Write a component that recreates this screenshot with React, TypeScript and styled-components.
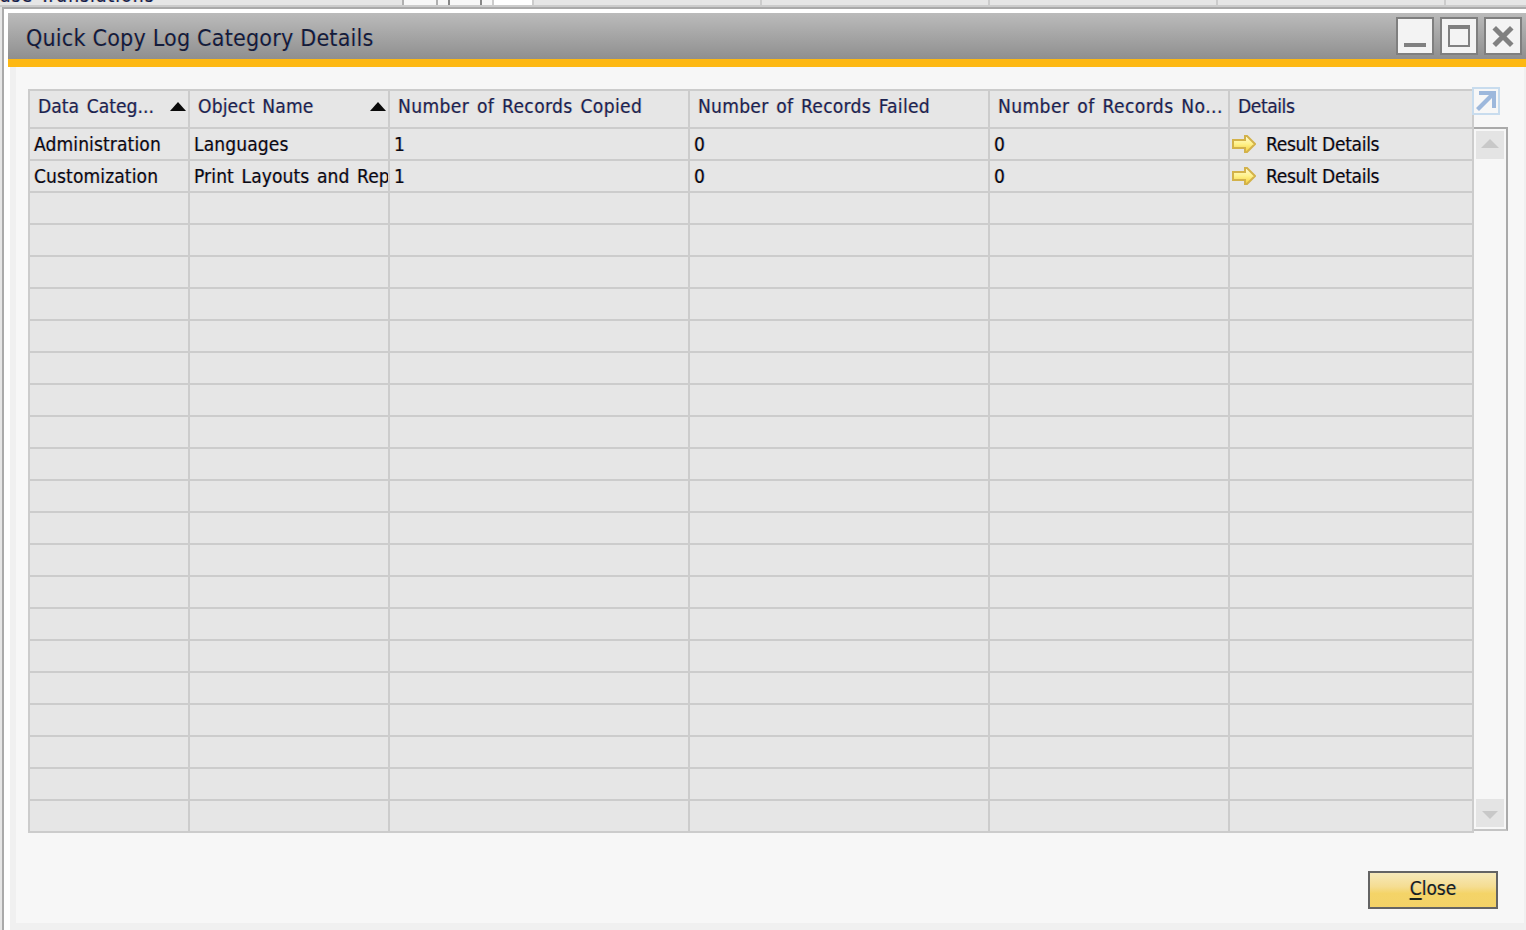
import React from "react";
import styled, { createGlobalStyle } from "styled-components";

const Global = createGlobalStyle`
  html, body { margin: 0; padding: 0; background: #e6e6e6; }
  #root { width: 1526px; height: 930px; overflow: hidden; }
  * { box-sizing: border-box; }
`;

const FONT = `"DejaVu Sans Condensed", "DejaVu Sans", sans-serif`;
const FRINGE = `text-shadow: -0.7px 0 rgba(225, 140, 50, 0.4), 0.7px 0 rgba(50, 120, 215, 0.4);`;

const Page = styled.div`
  display: flex;
  flex-direction: column;
  width: 1526px;
  height: 930px;
  font-family: ${FONT};
`;

const BackStrip = styled.div`
  display: flex;
  height: 7px;
  flex: none;
  border-bottom: 2px solid #cccccc;
  overflow: hidden;
  background: #e6e6e6;
`;
const BackText = styled.div`
  width: 402px;
  flex: none;
  font-size: 19px;
  line-height: 20px;
  margin-top: -15px;
  letter-spacing: 1.1px;
  color: #14204a;
  white-space: nowrap;
  ${FRINGE}
`;
const BackCell = styled.div<{ $w: number; $bg: string; $line: string }>`
  flex: none;
  width: ${(p) => p.$w}px;
  background: ${(p) => p.$bg};
  border-left: 2px solid ${(p) => p.$line};
`;

const Window = styled.div`
  flex: 1;
  margin-left: 2px;
  display: flex;
  flex-direction: column;
  border-left: 2px solid #aaaaaa;
  border-top: 2px solid #aaaaaa;
  background: #ffffff;
  padding: 4px 0 0 4px;
`;
const TitleBar = styled.div`
  flex: none;
  height: 54px;
  display: flex;
  align-items: center;
  padding: 0 4px 0 18px;
  border-bottom: 8px solid #fdb813;
  background: linear-gradient(#bbbbbb, #8f8f8f);
`;
const Title = styled.div`
  flex: 1;
  padding-top: 4px;
  font-size: 23px;
  letter-spacing: 0.23px;
  color: #141c3a;
  white-space: nowrap;
  ${FRINGE}
`;
const WinButtons = styled.div`
  display: flex;
  gap: 6px;
`;
const WinButton = styled.div`
  width: 38px;
  height: 38px;
  border: 2px solid #7f7f7f;
  background: #f3f3f3;
  svg { display: block; }
`;
const Body = styled.div`
  flex: 1;
  margin-left: 2px;
  border-left: 6px solid #f0f0f0;
  border-bottom: 7px solid #f0f0f0;
  border-right: 2px solid #f0f0f0;
  background: #f7f7f7;
  padding: 22px 26px 0 12px;
  display: flex;
  flex-direction: column;
`;
const Main = styled.div`
  display: flex;
  align-items: flex-start;
`;
const Table = styled.div`
  width: 1446px;
  flex: none;
  border-top: 2px solid #cccccc;
  border-left: 2px solid #cccccc;
  background: #e6e6e6;
`;
const COLS = "160px 200px 300px 300px 240px 244px";
const Row = styled.div<{ $head?: boolean }>`
  display: grid;
  grid-template-columns: ${COLS};
  height: ${(p) => (p.$head ? 38 : 32)}px;
  border-bottom: 2px solid #cccccc;
`;
const HeadCell = styled.div<{ $track: number }>`
  display: flex;
  align-items: center;
  justify-content: space-between;
  padding: 0 2px 6px 8px;
  border-right: 2px solid #cccccc;
  font-size: 19px;
  letter-spacing: ${(p) => p.$track}px;
  word-spacing: 2px;
  color: #1c2450;
  white-space: nowrap;
  overflow: hidden;
  span { ${FRINGE} }
`;
const Cell = styled.div`
  display: flex;
  align-items: center;
  padding-left: 4px;
  border-right: 2px solid #cccccc;
  font-size: 19px;
  letter-spacing: 0.13px;
  word-spacing: 2px;
  color: #0a0a14;
  white-space: nowrap;
  overflow: hidden;
  ${FRINGE}
`;
const DetailsLabel = styled.span`
  margin-left: 10px;
  letter-spacing: -0.3px;
  word-spacing: 0;
`;
const ArrowIcon = styled.svg`
  flex: none;
  margin-left: -2px;
`;
const Side = styled.div`
  flex: none;
  width: 34px;
  margin-top: -2px;
  display: flex;
  flex-direction: column;
`;
const Expand = styled.div`
  width: 28px;
  height: 28px;
  margin-left: -2px;
  margin-bottom: 12px;
  border: 2px solid #c8dcee;
  background: #f7f7f7;
  position: relative;
  svg { display: block; }
`;
const Scroll = styled.div`
  height: 704px;
  display: flex;
  flex-direction: column;
  justify-content: space-between;
  padding: 2px;
  border-top: 2px solid #aaaaaa;
  border-right: 2px solid #aaaaaa;
  border-bottom: 2px solid #c4c4c4;
`;
const ScrollBtn = styled.div`
  width: 28px;
  height: 28px;
  background: #e4e4e4;
  svg { display: block; }
`;
const Footer = styled.div`
  display: flex;
  justify-content: flex-end;
  margin-top: 38px;
`;
const CloseButton = styled.div`
  width: 130px;
  height: 38px;
  padding-bottom: 4px;
  border: 2px solid #646464;
  background: linear-gradient(#f6e9ba 0%, #f5dd92 40%, #f4d468 60%, #f3d267 100%);
  display: flex;
  align-items: center;
  justify-content: center;
  font-size: 19px;
  color: #16201c;
  ${FRINGE}
  u { text-underline-offset: 3px; text-decoration-thickness: 2px; }
`;

const SortTriangle = () => (
  <svg width="16" height="9" viewBox="0 0 16 9" style={{ flex: "none" }}>
    <path d="M8 0 L16 9 L0 9 Z" fill="#0a0a0a" />
  </svg>
);

const YellowArrow = () => (
  <ArrowIcon width="24" height="18" viewBox="0 0 24 18">
    <defs>
      <linearGradient id="arrowFill" x1="0" y1="0" x2="0" y2="1">
        <stop offset="0" stopColor="#fffbd6" />
        <stop offset="0.5" stopColor="#fff28a" />
        <stop offset="1" stopColor="#f5cf3a" />
      </linearGradient>
    </defs>
    <path
      d="M1 5 H13 V1 L15 1 L23 9 L15 17 L13 17 V13 H1 Z"
      fill="url(#arrowFill)"
      stroke="#d3b24a"
      strokeWidth="2"
    />
  </ArrowIcon>
);

const backCells = [
  { w: 34, bg: "#f7f7f7", line: "#b0b0b0" },
  { w: 12, bg: "#f7f7f7", line: "#b0b0b0" },
  { w: 32, bg: "#f7f7f7", line: "#888888" },
  { w: 12, bg: "#f7f7f7", line: "#888888" },
  { w: 40, bg: "#ffffff", line: "#cccccc" },
  { w: 228, bg: "#e6e6e6", line: "#cccccc" },
  { w: 228, bg: "#e6e6e6", line: "#cccccc" },
  { w: 228, bg: "#e6e6e6", line: "#cccccc" },
  { w: 228, bg: "#e6e6e6", line: "#cccccc" },
  { w: 82, bg: "#e6e6e6", line: "#cccccc" },
];

const headers = [
  { label: "Data Categ...", track: 0.08 },
  { label: "Object Name", track: 0.18 },
  { label: "Number of Records Copied", track: 0.4 },
  { label: "Number of Records Failed", track: 0.3 },
  { label: "Number of Records No...", track: 0.45 },
  { label: "Details", track: -0.4 },
];
const rows = [
  ["Administration", "Languages"],
  ["Customization", "Print Layouts and Reports"],
];
const blanks = Array.from({ length: 20 }, (_, i) => i);

export default function App() {
  return (
    <Page>
      <Global />
      <BackStrip>
        <BackText>ase Translations</BackText>
        {backCells.map((c, i) => (
          <BackCell key={i} $w={c.w} $bg={c.bg} $line={c.line} />
        ))}
      </BackStrip>
      <Window>
        <TitleBar>
          <Title>Quick Copy Log Category Details</Title>
          <WinButtons>
            <WinButton>
              <svg width="34" height="34" viewBox="0 0 34 34">
                <rect x="6" y="24" width="22" height="4" fill="#808080" />
              </svg>
            </WinButton>
            <WinButton>
              <svg width="34" height="34" viewBox="0 0 34 34">
                <rect x="7" y="7" width="20" height="20" fill="none" stroke="#808080" strokeWidth="2" />
                <rect x="6" y="6" width="22" height="4" fill="#808080" />
              </svg>
            </WinButton>
            <WinButton>
              <svg width="34" height="34" viewBox="0 0 34 34">
                <path d="M10 10.5 L24 24.5 M24 10.5 L10 24.5" stroke="#808080" strokeWidth="5" strokeLinecap="square" />
              </svg>
            </WinButton>
          </WinButtons>
        </TitleBar>
        <Body>
          <Main>
            <Table>
              <Row $head>
                {headers.map((h, i) => (
                  <HeadCell key={h.label} $track={h.track}>
                    <span>{h.label}</span>
                    {i < 2 && <SortTriangle />}
                  </HeadCell>
                ))}
              </Row>
              {rows.map((r) => (
                <Row key={r[0]}>
                  <Cell>{r[0]}</Cell>
                  <Cell>{r[1]}</Cell>
                  <Cell>1</Cell>
                  <Cell>0</Cell>
                  <Cell>0</Cell>
                  <Cell>
                    <YellowArrow />
                    <DetailsLabel>Result Details</DetailsLabel>
                  </Cell>
                </Row>
              ))}
              {blanks.map((b) => (
                <Row key={b}>
                  <Cell />
                  <Cell />
                  <Cell />
                  <Cell />
                  <Cell />
                  <Cell />
                </Row>
              ))}
            </Table>
            <Side>
              <Expand>
                <svg width="24" height="24" viewBox="0 0 24 24">
                  <path d="M5 2 H22 V19 H18 V9 L5 22 L2 19 L15 6 H5 Z" fill="#9db8dc" />
                </svg>
              </Expand>
              <Scroll>
                <ScrollBtn>
                  <svg width="28" height="28" viewBox="0 0 28 28">
                    <path d="M14 8 L23 17 H5 Z" fill="#c8c8c8" />
                  </svg>
                </ScrollBtn>
                <ScrollBtn>
                  <svg width="28" height="28" viewBox="0 0 28 28">
                    <path d="M6 12 H22 L14 20 Z" fill="#c8c8c8" />
                  </svg>
                </ScrollBtn>
              </Scroll>
            </Side>
          </Main>
          <Footer>
            <CloseButton>
              <span>
                <u>C</u>lose
              </span>
            </CloseButton>
          </Footer>
        </Body>
      </Window>
    </Page>
  );
}
